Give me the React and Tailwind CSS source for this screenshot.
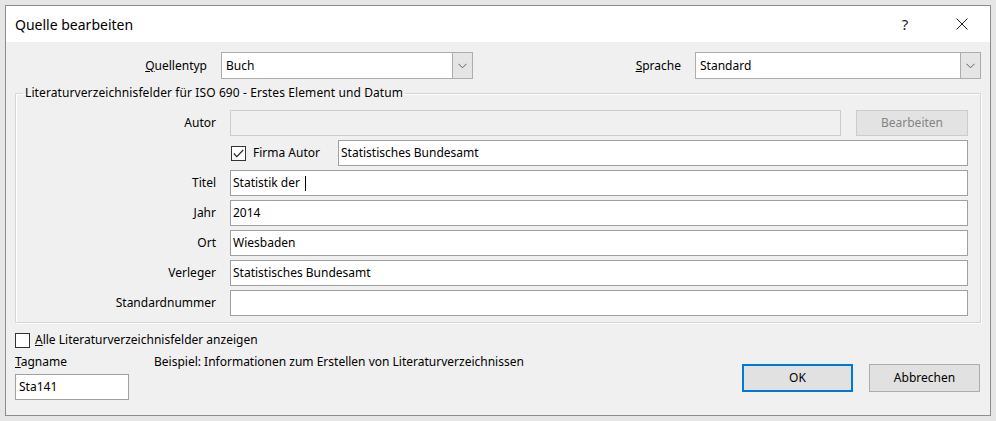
import React from "react";

const font = { fontFamily: '"Noto Sans", "Segoe UI", Arial, sans-serif' };

function Chevron() {
  return (
    <svg width="9" height="6" viewBox="0 0 9 6" className="block">
      <polyline points="0.5,0.8 4.5,4.8 8.5,0.8" fill="none" stroke="#606060" strokeWidth="1" />
    </svg>
  );
}

function Select({ value, className }) {
  return (
    <div className={"flex h-[27px] border border-[#adadad] bg-white " + className}>
      <div className="flex flex-1 items-center pl-[4px] text-[12px]">{value}</div>
      <div className="flex w-[20px] items-center justify-center border-l border-[#adadad] bg-[#e5e5e5]">
        <Chevron />
      </div>
    </div>
  );
}

function Input({ children, className = "" }) {
  return (
    <div className={"flex h-[26px] items-center border border-[#a0a0a0] bg-white pl-[2px] text-[12px] " + className}>
      {children}
    </div>
  );
}

function Row({ label, children }) {
  return (
    <div className="flex h-[26px] items-center">
      <div className="w-[200px] text-right text-[12px]">{label}</div>
      <div className="ml-[14px] flex flex-1">{children}</div>
    </div>
  );
}

function Checkbox({ checked }) {
  return (
    <div className="flex h-[15px] w-[15px] items-center justify-center border border-[#333] bg-white">
      {checked && (
        <svg width="11" height="9" viewBox="0 0 11 9">
          <polyline points="0.8,4.5 3.8,7.6 10.2,1" fill="none" stroke="#222" strokeWidth="1.1" />
        </svg>
      )}
    </div>
  );
}

export default function App() {
  return (
    <div className="h-[421px] w-[996px] overflow-hidden bg-[#e6e6e6] pl-[5px] pt-[5px] text-black" style={font}>
      <div className="flex h-[411px] w-[986px] flex-col border border-[#8c8c8c] bg-[#f0f0f0]">
        {/* title bar */}
        <div className="flex h-[36px] items-center bg-white pl-[9px]">
          <div className="flex-1 text-[14px]">Quelle bearbeiten</div>
          <div className="w-[20px] text-center text-[15px] text-[#222]">?</div>
          <div className="ml-[37px] mr-[18px] flex w-[20px] justify-center">
            <svg width="12" height="12" viewBox="0 0 12 12">
              <path d="M0.5 0.5 L11.5 11.5 M11.5 0.5 L0.5 11.5" stroke="#222" strokeWidth="1" />
            </svg>
          </div>
        </div>

        <div className="flex flex-col pl-[9px] pr-[9px]">
          {/* top row */}
          <div className="mt-[10px] flex h-[27px] items-center">
            <div className="w-[192px] text-right text-[12px]">
              <span className="underline">Q</span>uellentyp
            </div>
            <Select value="Buch" className="ml-[14px] w-[252px]" />
            <div className="flex-1" />
            <div className="text-[12px]">
              <span className="underline">S</span>prache
            </div>
            <Select value="Standard" className="ml-[14px] w-[286px]" />
          </div>

          {/* group */}
          <fieldset className="mt-[6px] border border-[#d5d5d5] pb-[6px] pr-[12px] shadow-[inset_1px_1px_0_#ffffff,1px_1px_0_#ffffff]">
            <legend className="ml-[7px] px-[2px] text-[12px] leading-[16px] tracking-[0.1px]">
              Literaturverzeichnisfelder für ISO 690 - Erstes Element und Datum
            </legend>
            <div className="mt-[9px] flex flex-col gap-[4px]">
              <Row label="Autor">
                <div className="h-[26px] flex-1 border border-[#cccccc] bg-[#f0f0f0]" />
                <div className="ml-[15px] flex h-[26px] w-[112px] items-center justify-center border border-[#cccccc] bg-[#e3e3e3] text-[12px] text-[#838383]">
                  Bearbeiten
                </div>
              </Row>
              <div className="flex h-[26px] items-center">
                <div className="w-[200px]" />
                <div className="ml-[15px]">
                  <Checkbox checked />
                </div>
                <div className="ml-[7px] text-[12px]">Firma Autor</div>
                <Input className="ml-[18px] flex-1">Statistisches Bundesamt</Input>
              </div>
              <Row label="Titel">
                <Input className="flex-1">
                  Statistik der
                  <span className="ml-[5px] inline-block h-[15px] w-px bg-black" />
                </Input>
              </Row>
              <Row label="Jahr">
                <Input className="flex-1">2014</Input>
              </Row>
              <Row label="Ort">
                <Input className="flex-1">Wiesbaden</Input>
              </Row>
              <Row label="Verleger">
                <Input className="flex-1">Statistisches Bundesamt</Input>
              </Row>
              <Row label="Standardnummer">
                <Input className="flex-1" />
              </Row>
            </div>
          </fieldset>

          {/* show all checkbox */}
          <div className="mt-[9px] flex h-[16px] items-center">
            <Checkbox />
            <div className="ml-[5px] text-[12px]">
              <span className="underline">A</span>lle Literaturverzeichnisfelder anzeigen
            </div>
          </div>

          {/* bottom */}
          <div className="mt-[6px] flex">
            <div className="flex w-[114px] flex-col">
              <div className="text-[12px] leading-[16px]">
                <span className="underline">T</span>agname
              </div>
              <Input className="mt-[4px] h-[26px] pl-[3px]">Sta141</Input>
            </div>
            <div className="ml-[25px] text-[12px] leading-[16px]">
              Beispiel: Informationen zum Erstellen von Literaturverzeichnissen
            </div>
            <div className="flex-1" />
            <div className="mr-[1px] mt-[10px] flex h-[28px] gap-[16px]">
              <div className="flex w-[111px] items-center justify-center border-2 border-[#0078d7] bg-[#e1e1e1] text-[12px]">
                OK
              </div>
              <div className="flex w-[111px] items-center justify-center border border-[#adadad] bg-[#e1e1e1] text-[12px]">
                Abbrechen
              </div>
            </div>
          </div>
        </div>
      </div>
    </div>
  );
}
